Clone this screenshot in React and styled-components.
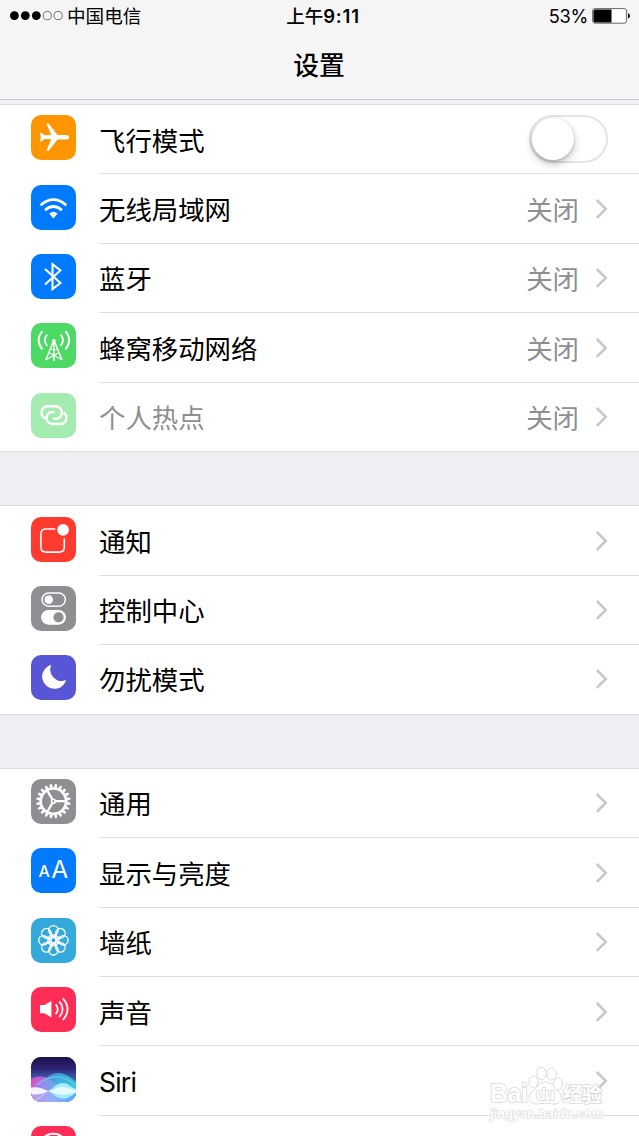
import React from "react";
import styled, { createGlobalStyle } from "styled-components";

const GlobalStyle = createGlobalStyle`
  * { box-sizing: border-box; }
  html, body { margin: 0; padding: 0; background: #efeff4; overflow: hidden; }
  body { font-family: Inter, "Noto Sans CJK SC", sans-serif; color: #000; }
`;

const Screen = styled.main`
  position: relative;
  width: 639px;
  height: 1136px;
  overflow: hidden;
  background: #efeff4;
`;

const Header = styled.header`
  height: 100px;
  background: linear-gradient(#f5f5f5, #f6f6f8);
  border-bottom: 1px solid #c6c6ca;
`;

const StatusBar = styled.div`
  display: grid;
  grid-template-columns: 1fr auto 1fr;
  align-items: center;
  height: 32px;
  padding: 0 9px 0 10px;
  font-size: 18.6px;
  line-height: 32px;
`;

const Carrier = styled.div`
  display: flex;
  align-items: center;
  gap: 4px;
`;

const Clock = styled.div`
  padding-left: 6px;
  font-weight: 600;
  font-size: 18.5px;
  letter-spacing: 0.8px;
  span { font-weight: 500; letter-spacing: 0; }
`;

const Power = styled.div`
  display: flex;
  align-items: center;
  justify-content: flex-end;
  gap: 4px;
  font-size: 18.2px;
  letter-spacing: -0.3px;
`;

const Title = styled.h1`
  margin: 0;
  padding-right: 1px;
  height: 67px;
  line-height: 67px;
  text-align: center;
  font-size: 25.8px;
  font-weight: 500;
`;

const List = styled.div`
  display: flex;
  flex-direction: column;
  gap: 52.9px;
  padding-top: 4px;
`;

const Group = styled.section`
  background: #fff;
  border-top: 1px solid #dadade;
  border-bottom: 1px solid #dadade;
`;

const Row = styled.div`
  display: flex;
  height: ${(p) => (p.$last ? 68.8 : 69.4)}px;
  padding-left: 31px;
`;

const Tile = styled.div`
  flex: none;
  width: 45px;
  height: 45px;
  margin: 10.3px 23px 0 0;
  border-radius: 10px;
  overflow: hidden;
  background: ${(p) => p.$color};
  opacity: ${(p) => (p.$dim ? 0.5 : 1)};
  svg { display: block; }
`;

const RowBody = styled.div`
  flex: 1;
  display: flex;
  align-items: center;
  padding: 3px 31px 0 0;
  border-bottom: 1px solid ${(p) => (p.$last ? "transparent" : "#dfdfe2")};
  font-size: 26.4px;
  line-height: 38px;
`;

const Label = styled.div`
  flex: 1;
  color: ${(p) => (p.$dim ? "#8e8e8e" : "#000")};
  letter-spacing: ${(p) => (p.$latin ? "-0.75px" : "0")};
`;

const Value = styled.div`
  margin-right: 16px;
  color: #8e8e93;
`;

const ChevronSvg = styled.svg`
  display: block;
  margin-bottom: 2px;
`;

const Switch = styled.div`
  width: 79px;
  height: 48px;
  margin-bottom: 3px;
  padding: 1px;
  border: 2px solid #e4e4e4;
  border-radius: 24px;
`;

const Knob = styled.div`
  width: 42px;
  height: 42px;
  border-radius: 50%;
  background: #fff;
  box-shadow: 0 4px 9px rgba(0, 0, 0, 0.24), 0 1px 3px rgba(0, 0, 0, 0.18);
`;

const Watermark = styled.svg`
  position: absolute;
  left: 484px;
  top: 1062px;
`;

const Icon = ({ children }) => (
  <svg width="45" height="45" viewBox="0 0 45 45" fill="none" stroke="#fff" strokeWidth="1.7">
    {children}
  </svg>
);

const Plane = () => (
  <Icon>
    <path
      fill="#fff"
      stroke="none"
      d="M9 17.7H10.2L13.6 20.2L20.2 19.9L15.4 8.4H17.7L26.6 20H35.6Q38.3 20.4 38.3 22.2Q38.3 24 35.6 24.4H26.6L17.7 35.7H15.4L20.2 24.3L13.6 24L10.2 26.6H9L9.8 22.2Z"
    />
  </Icon>
);

const Wifi = () => (
  <Icon>
    <g strokeWidth="2.7">
      <path d="M9.6 20.2Q22.4 9.2 35.3 20.2" />
      <path d="M14 25.2Q22.4 17.8 30.9 25.2" />
    </g>
    <path fill="#fff" stroke="none" d="M18.2 28.5Q22.4 25.2 26.6 28.5L22.4 33.6Z" />
  </Icon>
);

const Bluetooth = () => (
  <Icon>
    <path strokeWidth="2.1" d="M14 15L29.4 29L21.5 35.2V10.2L29.4 16.4L14 30.5" />
  </Icon>
);

const Cellular = () => (
  <Icon>
    <g strokeWidth="1.9">
      <path d="M11.4 8Q3.8 17.2 11.4 26.4M16.2 11.7Q11.4 17.3 16.2 22.9" />
      <path d="M34.4 8Q42 17.2 34.4 26.4M29.6 11.7Q34.4 17.3 29.6 22.9" />
    </g>
    <g strokeWidth="1.5">
      <path d="M22.9 17L14.7 37.3M22.9 17L31.1 37.3M22.9 17V38" />
      <path d="M19.5 26.5H26.3M18 29.8L30.5 36.4M27.8 29.8L15.3 36.4" strokeWidth="1.1" />
    </g>
    <circle cx="22.9" cy="17.9" r="1.8" fill="#fff" stroke="none" />
  </Icon>
);

const Hotspot = () => (
  <Icon>
    <g strokeWidth="2.4">
      <path d="M14.5 25.4A6.3 6.3 0 0 1 16.6 13.3H24.6A6.3 6.3 0 0 1 24.6 25.9H22" />
      <path d="M23.5 19H21.5A6 6 0 0 0 21.5 31H29.5A6.2 6.2 0 0 0 32.8 19.7" />
    </g>
  </Icon>
);

const Notifications = () => (
  <Icon>
    <path strokeWidth="1.6" d="M24.3 12H15Q9.9 12 9.9 17.1V30Q9.9 35.1 15 35.1H28.2Q33.3 35.1 33.3 30V21.4" />
    <circle cx="32.1" cy="12.8" r="5.9" fill="#fff" stroke="none" />
  </Icon>
);

const Controls = () => (
  <Icon>
    <rect x="11" y="7" width="23.4" height="13.2" rx="6.6" strokeWidth="1.5" />
    <circle cx="17.7" cy="13.6" r="4.3" fill="#fff" stroke="none" />
    <rect x="10.1" y="24" width="24.9" height="14.7" rx="7.35" fill="#fff" stroke="none" />
    <circle cx="27.5" cy="31.3" r="5.1" fill="#8e8e93" stroke="none" />
  </Icon>
);

const Moon = () => (
  <Icon>
    <path fill="#fff" stroke="none" d="M20.3 9.8A12.2 12.2 0 1 0 35.1 25A11.4 11.4 0 0 1 20.3 9.8Z" />
  </Icon>
);

const teeth = Array.from({ length: 20 }, (_, i) => i * 18 + 9);

const Gear = () => (
  <Icon>
    <g transform="translate(22.4 22.2)">
      <circle r="12.6" strokeWidth="2.5" />
      {teeth.map((a) => (
        <path key={a} transform={`rotate(${a})`} d="M-1.7 -13.4L-0.9 -17.2H0.9L1.7 -13.4Z" fill="#fff" stroke="none" />
      ))}
      {[0, 120, 240].map((a) => (
        <path key={a} transform={`rotate(${a})`} d="M1.4 0H12" strokeWidth="2.3" />
      ))}
      <circle r="1.9" strokeWidth="1.6" />
    </g>
  </Icon>
);

const Display = () => (
  <Icon>
    <g fill="#fff" stroke="none" fontFamily="Inter, sans-serif">
      <text x="7.6" y="29.4" fontSize="16" fontWeight="500">A</text>
      <text x="20.3" y="30.3" fontSize="24.5" fontWeight="400">A</text>
    </g>
  </Icon>
);

const petals = Array.from({ length: 8 }, (_, i) => i * 45);

const Wallpaper = () => (
  <Icon>
    <g transform="translate(22.4 22.3)" strokeWidth="1.4">
      {petals.map((a) => (
        <g key={a} transform={`rotate(${a})`}>
          <circle cy="-10" r="4.7" />
          <path d="M-3.9 -7.4L0 -2.9L3.9 -7.4" />
        </g>
      ))}
      <circle r="2.7" />
    </g>
  </Icon>
);

const Sound = () => (
  <Icon>
    <path fill="#fff" stroke="none" d="M9 18.1H13.5L20.4 13.9V30.5L13.5 26.3H9Z" />
    <g strokeWidth="1.8">
      <path d="M24.7 17.3Q29 22.2 24.7 27.1" />
      <path d="M28.3 14.4Q35 22.2 28.3 30" />
      <path d="M31.8 11.4Q41.4 22.2 31.8 33" />
    </g>
  </Icon>
);

const Siri = () => (
  <svg width="45" height="45" viewBox="0 0 45 45">
    <defs>
      <linearGradient id="siriSky" x1="0" y1="0" x2="0" y2="1">
        <stop offset="0" stopColor="#1c0f4a" />
        <stop offset="0.25" stopColor="#2c2270" />
        <stop offset="0.45" stopColor="#3d53a8" />
        <stop offset="0.75" stopColor="#6c8ee0" />
        <stop offset="1" stopColor="#76a6ee" />
      </linearGradient>
      <linearGradient id="siriPink" x1="0" y1="0" x2="1" y2="0">
        <stop offset="0" stopColor="#f04ccb" />
        <stop offset="0.5" stopColor="#c58af0" stopOpacity="0.85" />
        <stop offset="1" stopColor="#5a8cff" stopOpacity="0.2" />
      </linearGradient>
      <linearGradient id="siriTeal" x1="0" y1="0" x2="1" y2="0">
        <stop offset="0" stopColor="#8e8cf8" stopOpacity="0.3" />
        <stop offset="0.6" stopColor="#45c4ee" stopOpacity="0.75" />
        <stop offset="1" stopColor="#2fd8d8" stopOpacity="0.8" />
      </linearGradient>
      <linearGradient id="siriFloor" x1="0" y1="0" x2="1" y2="0">
        <stop offset="0" stopColor="#b4a8f4" />
        <stop offset="0.5" stopColor="#8cb8fa" />
        <stop offset="1" stopColor="#4cb4ff" />
      </linearGradient>
    </defs>
    <rect width="45" height="45" fill="url(#siriSky)" />
    <path d="M0 22Q11 16 22 25T45 42V45H0Z" fill="url(#siriPink)" opacity="0.85" />
    <path d="M0 31C10 28 15 17 26 16Q36 16 45 25V34L0 36Z" fill="url(#siriTeal)" />
    <path d="M5 28C14 22 20 19 28 20Q37 21 45 29" fill="none" stroke="#6ae0f2" strokeWidth="1.2" opacity="0.7" />
    <path d="M0 34H45V45H0Z" fill="url(#siriFloor)" opacity="0.8" />
    <path d="M17 34C22 32 25 26 32 26C38 26 41 31 45 32V36C40 39 37 42 31 41.5C25 41 22 36 17 34Z" fill="#a8f2ff" opacity="0.9" />
    <path d="M0 30.5Q8 29 17 34Q8 39 0 37Z" fill="#fff" opacity="0.9" />
    <path d="M17 34C24 33 27 29 33 30Q39 31 45 33.5V35Q39 37 33 38Q26 38 17 34Z" fill="#fff" opacity="0.75" />
    <path d="M17 34Q10 39 3 45" fill="none" stroke="#f0e4ff" opacity="0.6" />
  </svg>
);

const Music = () => (
  <Icon>
    <circle cx="22.4" cy="22" r="14.2" strokeWidth="2" />
  </Icon>
);

const Chevron = () => (
  <ChevronSvg width="13" height="22" viewBox="0 0 13 22" fill="none">
    <path d="M1.8 2L10.7 10.9L1.8 19.8" stroke="#c7c7cc" strokeWidth="2.6" />
  </ChevronSvg>
);

const groups = [
  [
    { label: "飞行模式", color: "#ff9500", icon: Plane, toggle: true },
    { label: "无线局域网", color: "#007aff", icon: Wifi, value: "关闭" },
    { label: "蓝牙", color: "#007aff", icon: Bluetooth, value: "关闭" },
    { label: "蜂窝移动网络", color: "#4cd964", icon: Cellular, value: "关闭" },
    { label: "个人热点", color: "#4cd964", icon: Hotspot, value: "关闭", dim: true },
  ],
  [
    { label: "通知", color: "#ff3b30", icon: Notifications },
    { label: "控制中心", color: "#8e8e93", icon: Controls },
    { label: "勿扰模式", color: "#5856d6", icon: Moon },
  ],
  [
    { label: "通用", color: "#8e8e93", icon: Gear },
    { label: "显示与亮度", color: "#007aff", icon: Display },
    { label: "墙纸", color: "#34aadc", icon: Wallpaper },
    { label: "声音", color: "#ff2d55", icon: Sound },
    { label: "Siri", color: "#1a0d43", icon: Siri, latin: true },
    { label: "", color: "#ff2d55", icon: Music },
  ],
];

const SettingRow = ({ item, last }) => {
  const Glyph = item.icon;
  return (
    <Row $last={last}>
      <Tile $color={item.color} $dim={item.dim}>
        <Glyph />
      </Tile>
      <RowBody $last={last}>
        <Label $dim={item.dim} $latin={item.latin}>{item.label}</Label>
        {item.value && <Value>{item.value}</Value>}
        {item.toggle ? (
          <Switch>
            <Knob />
          </Switch>
        ) : (
          <Chevron />
        )}
      </RowBody>
    </Row>
  );
};

const Signal = () => (
  <svg width="53" height="10" viewBox="0 0 53 10">
    {[4.4, 15.3, 26.3].map((x) => (
      <circle key={x} cx={x} cy="4.6" r="4.4" />
    ))}
    {[37.3, 48.1].map((x) => (
      <circle key={x} cx={x} cy="4.6" r="4.1" fill="none" stroke="#333" strokeWidth="0.7" />
    ))}
  </svg>
);

const Battery = () => (
  <svg width="38" height="16" viewBox="0 0 38 16">
    <rect x="0.6" y="0.6" width="34" height="14.6" rx="2.4" fill="#fff" stroke="#444" strokeWidth="0.8" />
    <path d="M3 1.4H19.5V14.4H3Q1.4 14.4 1.4 12.8V3Q1.4 1.4 3 1.4Z" />
    <path d="M36 5.3Q38 6 38 7.9Q38 9.8 36 10.5Z" />
  </svg>
);

const Brand = () => (
  <Watermark width="130" height="62" viewBox="0 0 130 62">
    <g fill="#fff" stroke="#dcdcdc" strokeWidth="1">
      <ellipse cx="49.5" cy="20" rx="4.5" ry="6" />
      <ellipse cx="57.5" cy="11.5" rx="4.7" ry="6.3" />
      <ellipse cx="67.5" cy="12" rx="4.7" ry="6" />
      <ellipse cx="74" cy="22" rx="4.6" ry="6" />
      <path d="M61.5 20C54 20 53 27 48 30C42 35 46 43 54 42Q61.5 40 69 42C77 43 80 35 75 30C70 26 69 20 61.5 20Z" />
    </g>
    <g fontFamily="'Liberation Sans', 'Noto Sans CJK SC', sans-serif" fontWeight="700" fill="#fff" stroke="#d9d9d9" strokeWidth="1.6" paintOrder="stroke">
      <text x="6" y="40" fontSize="25" textLength="38">Bai</text>
      <text x="52" y="38" fontSize="17" textLength="19">du</text>
      <text x="79" y="39.5" fontSize="20" textLength="39">经验</text>
      <text x="6" y="56" fontSize="12.5" textLength="113" strokeWidth="1.2">jingyan.baidu.com</text>
    </g>
  </Watermark>
);

export default function App() {
  return (
    <Screen>
      <GlobalStyle />
      <Header>
        <StatusBar>
          <Carrier>
            <Signal />
            中国电信
          </Carrier>
          <Clock>
            <span>上午</span>9:11
          </Clock>
          <Power>
            53%
            <Battery />
          </Power>
        </StatusBar>
        <Title>设置</Title>
      </Header>
      <List>
        {groups.map((rows, g) => (
          <Group key={g}>
            {rows.map((item, i) => (
              <SettingRow key={i} item={item} last={i === rows.length - 1} />
            ))}
          </Group>
        ))}
      </List>
      <Brand />
    </Screen>
  );
}
